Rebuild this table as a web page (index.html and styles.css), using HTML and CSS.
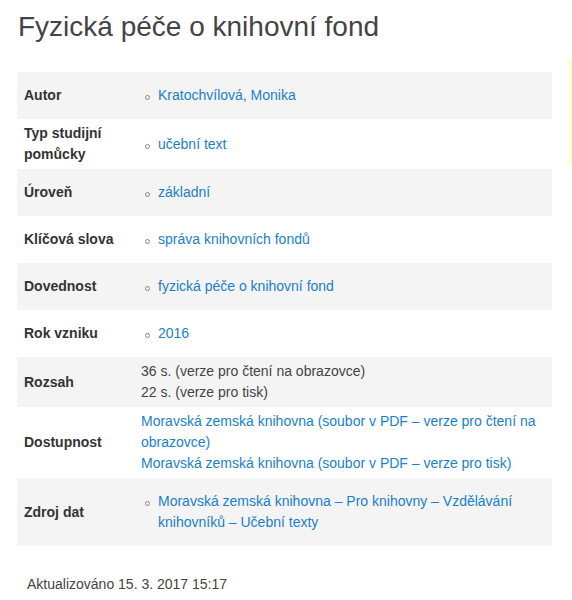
FILE: index.html
```html
<!DOCTYPE html>
<html lang="cs">
<head>
<meta charset="utf-8">
<title>Fyzická péče o knihovní fond</title>
<link rel="stylesheet" href="styles.css">
</head>
<body>
<div class="page">
  <h1 class="title">Fyzická péče o knihovní fond</h1>
  <table class="info">
    <tr class="odd"><th>Autor</th><td><ul class="vals"><li><a href="#">Kratochvílová, Monika</a></li></ul></td></tr>
    <tr><th>Typ studijní pomůcky</th><td><ul class="vals"><li><a href="#">učební text</a></li></ul></td></tr>
    <tr class="odd"><th>Úroveň</th><td><ul class="vals"><li><a href="#">základní</a></li></ul></td></tr>
    <tr><th>Klíčová slova</th><td><ul class="vals"><li><a href="#">správa knihovních fondů</a></li></ul></td></tr>
    <tr class="odd"><th>Dovednost</th><td><ul class="vals"><li><a href="#">fyzická péče o knihovní fond</a></li></ul></td></tr>
    <tr><th>Rok vzniku</th><td><ul class="vals"><li><a href="#">2016</a></li></ul></td></tr>
    <tr class="odd"><th>Rozsah</th><td>36 s. (verze pro čtení na obrazovce)<br>22 s. (verze pro tisk)</td></tr>
    <tr><th>Dostupnost</th><td><a href="#">Moravská zemská knihovna (soubor v PDF – verze pro čtení na obrazovce)</a><br><a href="#">Moravská zemská knihovna (soubor v PDF – verze pro tisk)</a></td></tr>
    <tr class="odd"><th>Zdroj dat</th><td><ul class="vals"><li><a href="#">Moravská zemská knihovna – Pro knihovny – Vzdělávání knihovníků – Učební texty</a></li></ul></td></tr>
  </table>
  <p class="updated">Aktualizováno 15. 3. 2017 15:17</p>
</div>
<div class="edge"></div>
</body>
</html>
```

FILE: styles.css
```css
html, body {
  margin: 0;
  padding: 0;
  background: #fff;
}
body {
  font-family: "Liberation Sans", Arial, sans-serif;
  font-size: 14px;
  line-height: 21px;
  color: #444;
}
.page {
  padding: 0 20px 0 17px;
}
.title {
  margin: 0;
  padding-top: 10px;
  padding-left: 1px;
  font-size: 28px;
  line-height: 34px;
  font-weight: normal;
  color: #444;
}
.info {
  margin-top: 28px;
  width: 535px;
  border-collapse: collapse;
}
.info th, .info td {
  padding: 4px 7px;
  vertical-align: middle;
  text-align: left;
}
.info th {
  width: 103px;
  font-weight: bold;
  color: #333;
}
.info td {
  color: #444;
}
.info tr.odd {
  background: #f4f4f4;
}
.info a {
  color: #1a7fca;
  text-decoration: none;
}
.vals {
  list-style: none;
  margin: 9px 0;
  padding: 0 0 0 17px;
}
.vals li {
  position: relative;
}
.vals li::before {
  content: "";
  position: absolute;
  left: -13px;
  top: 10px;
  width: 3px;
  height: 3px;
  border: 1px solid #888;
  border-radius: 50%;
}
.updated {
  margin: 28px 0 0 10px;
  color: #444;
}
.edge {
  position: absolute;
  top: 58px;
  right: 0;
  width: 3px;
  height: 107px;
  background: linear-gradient(to right, #ffffe0, #fffbb0);
  border-radius: 2px;
}
```
